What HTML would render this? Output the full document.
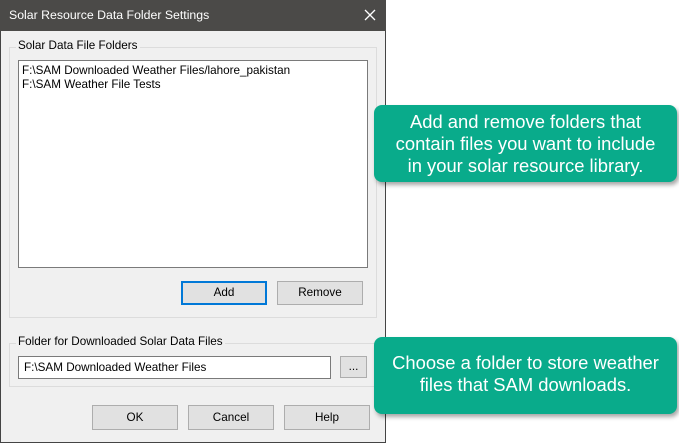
<!DOCTYPE html>
<html><head><style>
*{box-sizing:border-box;margin:0;padding:0}
body{width:679px;height:443px;background:#fff;position:relative;overflow:hidden;font-family:"Liberation Sans",sans-serif;font-size:11.7px;color:#000}
.abs{position:absolute}
.win{left:0;top:0;width:386px;height:443px;background:#f0f0f0;border:1px solid #444;border-top:none}
.title{left:0;top:0;width:386px;height:31px;background:#4b4a48;color:#fff;font-size:12.3px;line-height:31px;padding-left:9px}
.grp{border:1px solid #dcdcdc}
.lbl{background:#f0f0f0;padding:0 2px}
.box{background:#fff;border:1px solid #7a7a7a}
.btn{background:#e1e1e1;border:1px solid #adadad;text-align:center}
.call{background:#09ab8b;border-radius:8px;color:#fff;font-size:18.4px;line-height:22px;text-align:center;box-shadow:2px 3px 4px rgba(0,0,0,.35)}
</style></head><body>
<div class="abs win"></div>
<div class="abs title">Solar Resource Data Folder Settings</div>
<svg class="abs" style="left:364px;top:9px" width="12" height="12"><path d="M1 1L11 11M11 1L1 11" stroke="#fff" stroke-width="1.3"/></svg>

<div class="abs grp" style="left:9px;top:47px;width:368px;height:271px"></div>
<div class="abs lbl" style="left:16px;top:39px">Solar Data File Folders</div>
<div class="abs box" style="left:18px;top:60px;width:350px;height:208px;padding:3px 3px;line-height:14px">F:\SAM Downloaded Weather Files/lahore_pakistan<br>F:\SAM Weather File Tests</div>
<div class="abs btn" style="left:181px;top:281px;width:86px;height:24px;line-height:20px;border:2px solid #0078d7">Add</div>
<div class="abs btn" style="left:277px;top:281px;width:86px;height:24px;line-height:22px">Remove</div>

<div class="abs grp" style="left:9px;top:343px;width:368px;height:44px"></div>
<div class="abs lbl" style="left:16px;top:335px">Folder for Downloaded Solar Data Files</div>
<div class="abs box" style="left:18px;top:356px;width:313px;height:23px;line-height:21px;padding-left:5px">F:\SAM Downloaded Weather Files</div>
<div class="abs btn" style="left:340px;top:356px;width:27px;height:22px;line-height:20px">...</div>

<div class="abs btn" style="left:92px;top:405px;width:86px;height:25px;line-height:23px">OK</div>
<div class="abs btn" style="left:188px;top:405px;width:86px;height:25px;line-height:23px">Cancel</div>
<div class="abs btn" style="left:284px;top:405px;width:86px;height:25px;line-height:23px">Help</div>

<div class="abs call" style="left:374px;top:105px;width:303px;height:77px;padding-top:6px">Add and remove folders that<br>contain files you want to include<br>in your solar resource library.</div>
<div class="abs call" style="left:374px;top:337px;width:303px;height:77px;padding-top:15px">Choose a folder to store weather<br>files that SAM downloads.</div>
</body></html>
